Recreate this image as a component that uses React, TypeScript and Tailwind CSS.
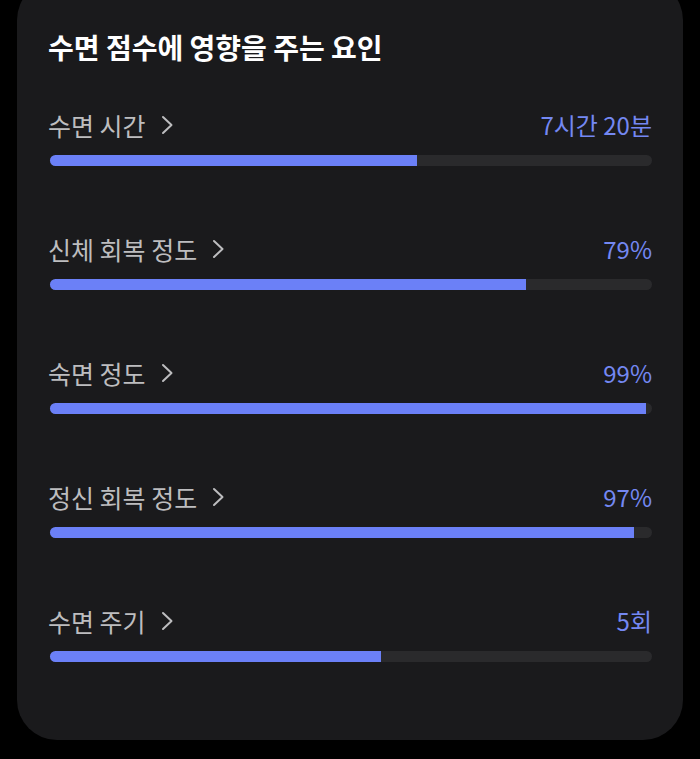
const factors = [
  { label: '수면 시간', value: '7시간 20분', pct: 61 },
  { label: '신체 회복 정도', value: '79%', pct: 79 },
  { label: '숙면 정도', value: '99%', pct: 99 },
  { label: '정신 회복 정도', value: '97%', pct: 97 },
  { label: '수면 주기', value: '5회', pct: 55 },
]

function Chevron() {
  return (
    <svg width="14" height="22" viewBox="0 0 14 22" fill="none" className="ml-[14px] shrink-0">
      <polyline
        points="3,3 11.5,11 3,19"
        stroke="#bdbdbf"
        strokeWidth="2"
        strokeLinecap="round"
        strokeLinejoin="round"
      />
    </svg>
  )
}

export default function App() {
  return (
    <div
      className="min-h-[759px] w-full overflow-hidden bg-black pb-[19px]"
      style={{ fontFamily: '"Noto Sans CJK KR", "Noto Sans", sans-serif' }}
    >
      <div className="mx-[17px] -mt-[20px] rounded-[40px] bg-[#1a1a1c] pl-[33px] pr-[31px] pt-[49px] pb-[78px]">
        <h2 className="-ml-[2px] text-[28px] font-bold leading-[36px] text-white">
          수면 점수에 영향을 주는 요인
        </h2>
        <ul className="mt-[44px] flex flex-col gap-[67px]">
          {factors.map((f) => (
            <li key={f.label}>
              <div className="flex items-center justify-between">
                <span className="-ml-[2px] flex items-center text-[25px] leading-[32px] text-[#bdbdbf]">
                  {f.label}
                  <Chevron />
                </span>
                <span className="text-[24px] leading-[32px] text-[#7488f2]">
                  {f.value}
                </span>
              </div>
              <div className="mt-[14px] h-[11px] w-full rounded-full bg-[#2a2a2c]">
                <div
                  className="h-full rounded-l-full bg-[#6b80f7]"
                  style={{ width: `${f.pct}%` }}
                />
              </div>
            </li>
          ))}
        </ul>
      </div>
    </div>
  )
}
